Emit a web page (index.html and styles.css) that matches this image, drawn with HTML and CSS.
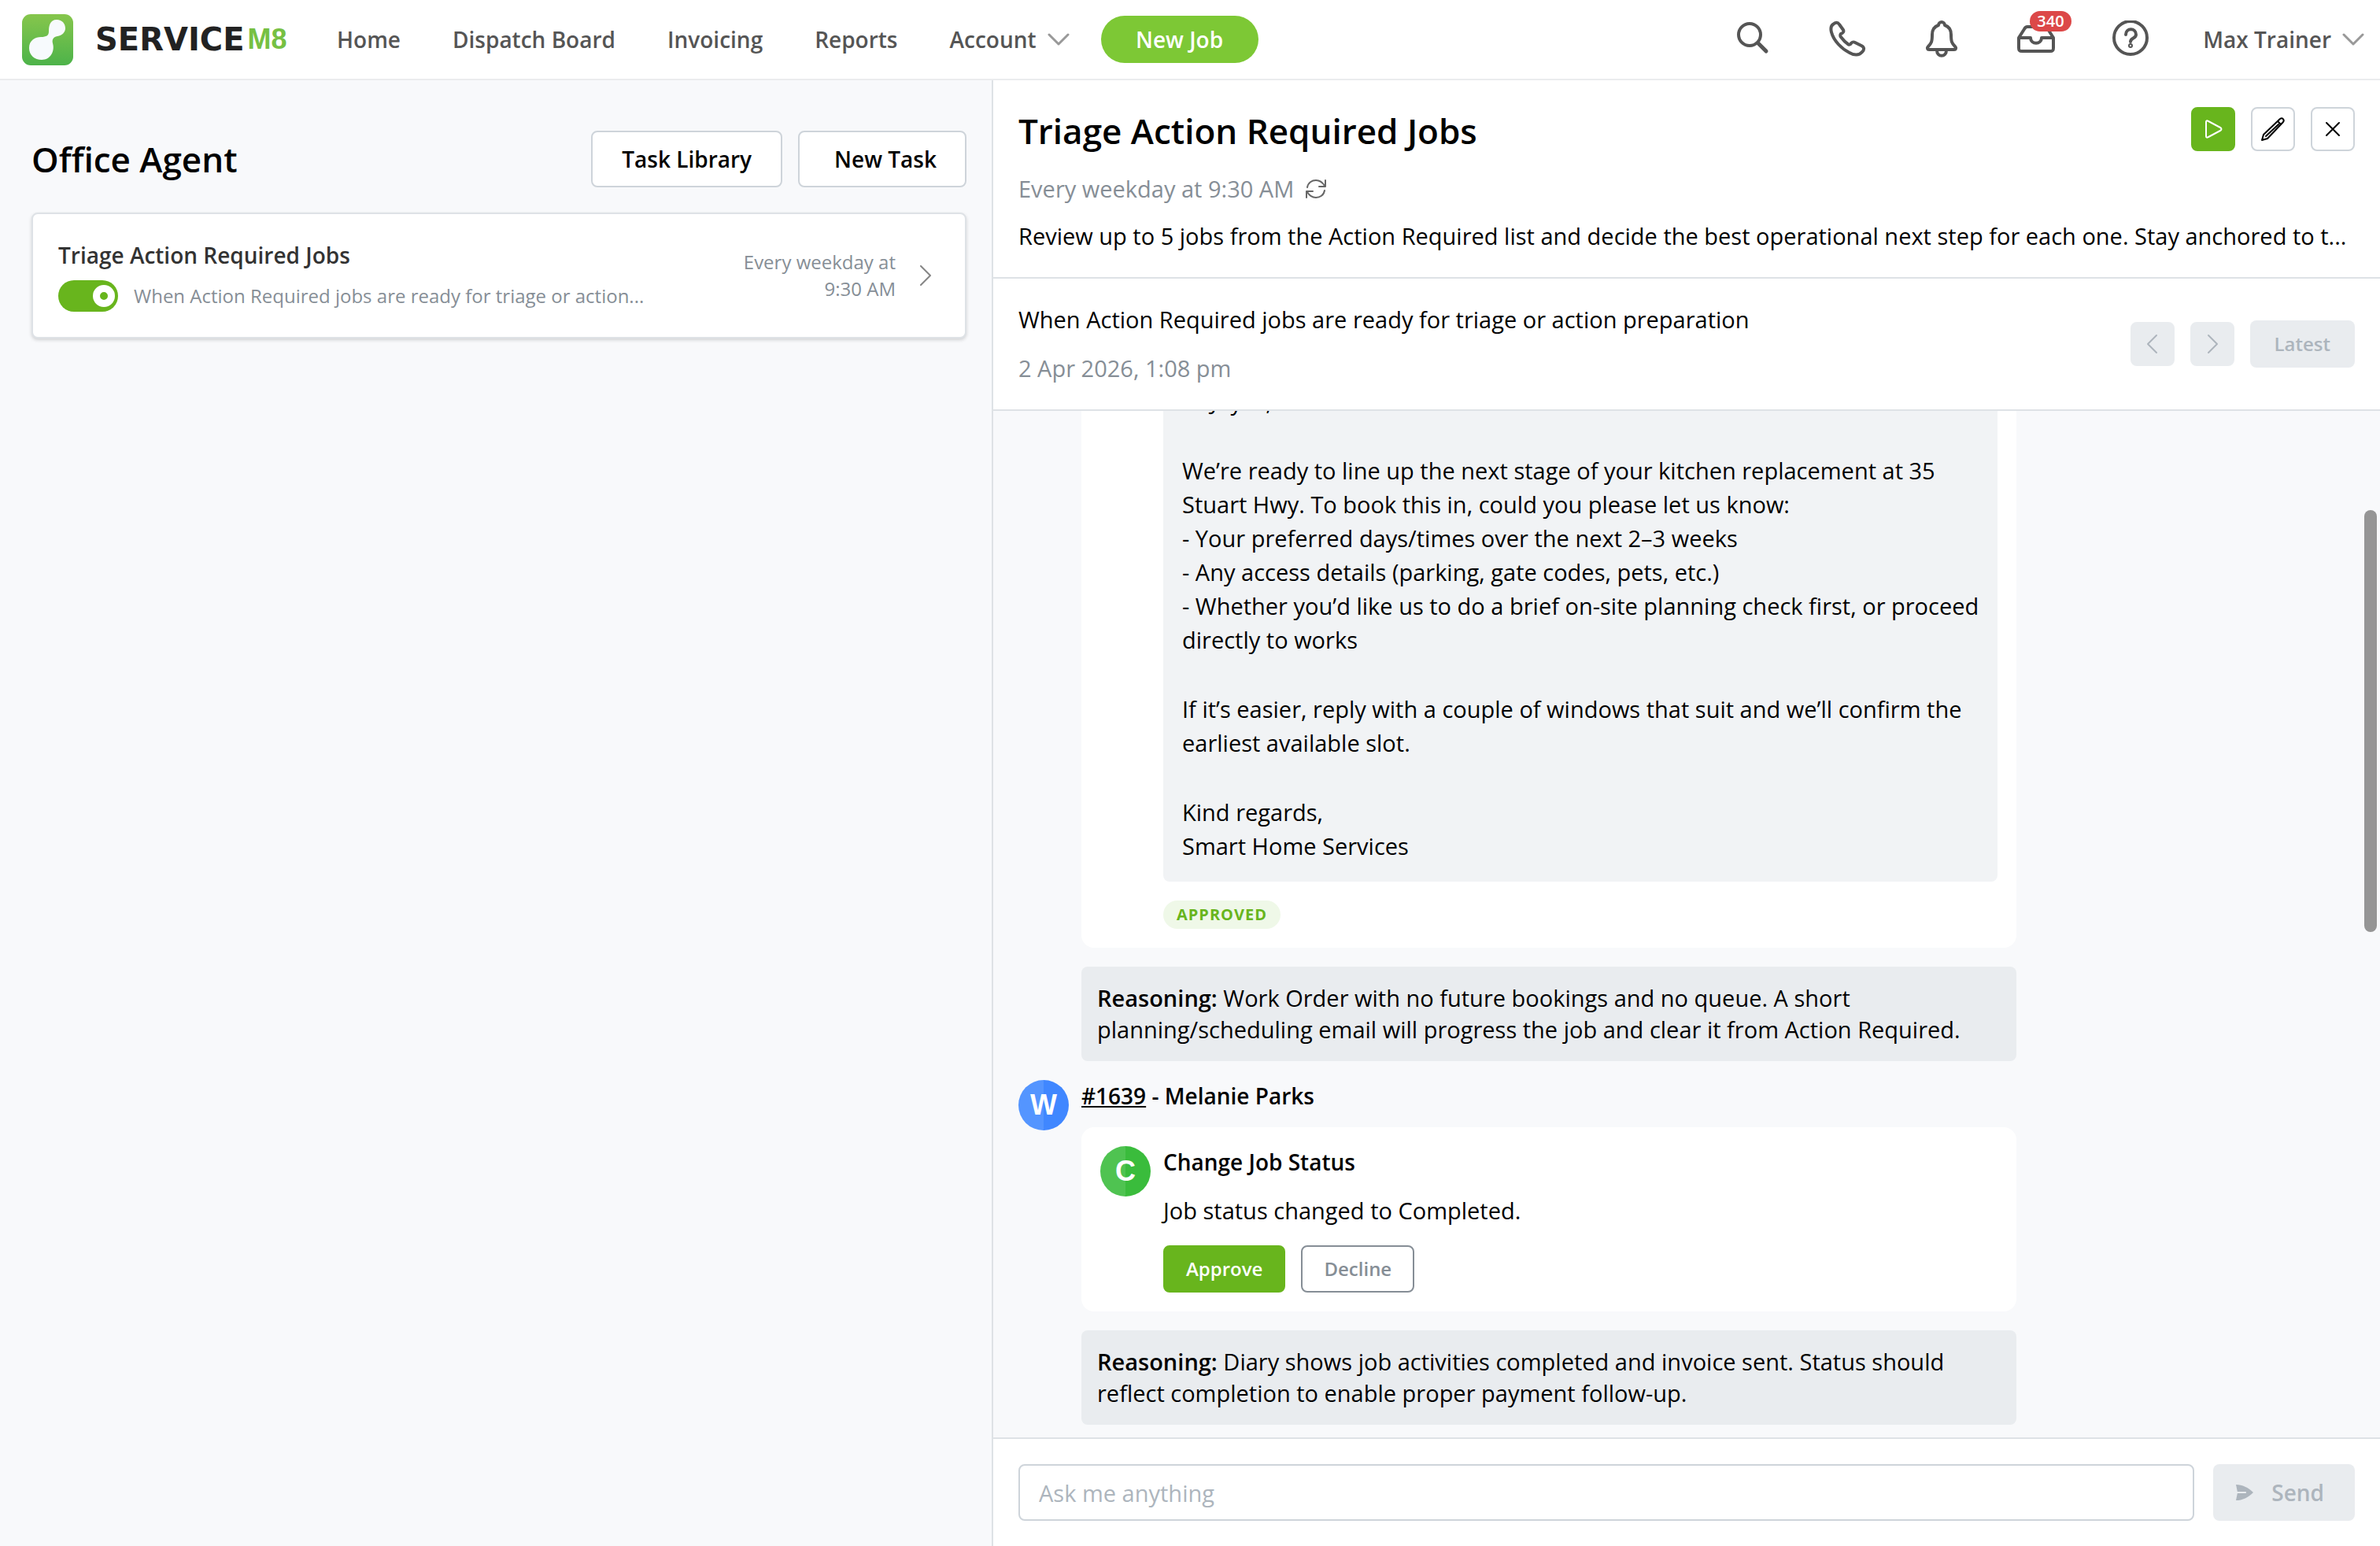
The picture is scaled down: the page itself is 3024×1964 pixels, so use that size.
FILE: index.html
```
<!DOCTYPE html>
<html lang="en">
  <head>
    <meta charset="UTF-8" />
    <title>Office Agent - ServiceM8</title>
    <link rel="stylesheet" href="styles.css">
  </head>
  <body>
    <!-- Top navigation -->
    <header class="topbar">
      <a class="logo" href="#" aria-label="ServiceM8">
        <svg class="logo-mark" viewBox="0 0 65 65">
          <defs>
            <linearGradient id="logoGreen" x1="0" y1="0" x2="0" y2="1">
              <stop offset="0" stop-color="#86c64c" />
              <stop offset="1" stop-color="#4db34a" />
            </linearGradient>
          </defs>
          <rect width="65" height="65" rx="11" fill="url(#logoGreen)" />
          <path fill="#f7fafd" d="M44 7c7 0 11 5 11 11 0 5-4 9-10 10-6 1-7 5-6 9 3 10-3 21-14 21-9 0-16-6-16-15 0-10 8-14 15-14 7 0 10-2 10-7 0-8 2-15 10-15z" />
        </svg>
        <span class="logo-name">SERVICE</span><span class="logo-m8">M8</span>
      </a>
      <nav class="nav">
        <a href="#">Home</a>
        <a href="#">Dispatch Board</a>
        <a href="#">Invoicing</a>
        <a href="#">Reports</a>
        <a href="#" class="has-arrow">Account
          <svg class="arrow" viewBox="0 0 28 16"><path d="M2 2l12 12L26 2" /></svg>
        </a>
      </nav>
      <button class="new-job">New Job</button>

      <div class="tools">
        <button class="tool" aria-label="Search">
          <svg viewBox="0 2 48 48"><circle cx="20" cy="20" r="14" /><path d="M31 31l10 10" stroke-width="5" /></svg>
        </button>
        <button class="tool" aria-label="Phone">
          <svg viewBox="0 2 48 48"><path d="M6 7c3-3 6-3 8 0l5 7c1 2 0 4-3 5-1 1-1 3 0 4 3 4 6 7 9 9 1 1 3 1 4-1 2-2 3-2 5-1l8 4c4 2 4 5 1 8-4 5-11 4-16 1C17 38 7 28 4 17 3 13 3 9 6 7z" /></svg>
        </button>
        <button class="tool" aria-label="Notifications">
          <svg viewBox="0 2 48 48"><path d="M24 4c-2 0-4 2-4 4-6 2-8 7-8 12 0 9-1 11-5 15-2 2-1 4 1 4h32c2 0 3-2 1-4-4-4-5-6-5-15 0-5-2-10-8-12 0-2-2-4-4-4zM18 40c0 9 12 9 12 0" /></svg>
        </button>
        <button class="tool" aria-label="Inbox">
          <svg viewBox="0 2 48 48"><path d="M2 24l7-11c1-2 2-3 4-3h22c2 0 3 1 4 3l7 11v13c0 3-1 4-4 4H6c-3 0-4-1-4-4zM2 24h15c0 9 14 9 14 0h15" /></svg>
          <span class="badge">340</span>
        </button>
        <button class="tool" aria-label="Help">
          <svg viewBox="0 2 48 48"><circle cx="24" cy="24" r="21" /><path d="M18 20c0-9 13-9 13 0 0 5-7 4-7 9" /><circle cx="24" cy="34" r="1" /></svg>
        </button>
      </div>
      <a href="#" class="user has-arrow">Max Trainer
        <svg class="arrow" viewBox="0 0 28 16"><path d="M2 2l12 12L26 2" /></svg>
      </a>
    </header>

    <main class="columns">
      <!-- Task list -->
      <section class="tasks">
        <div class="tasks-head">
          <h1>Office Agent</h1>
          <button class="btn">Task Library</button>
          <button class="btn btn-new">New Task</button>
        </div>
        <article class="task">
          <div class="task-main">
            <h2>Triage Action Required Jobs</h2>
            <div class="task-row">
              <input type="checkbox" class="toggle" id="taskOn" checked>
              <label for="taskOn">When Action Required jobs are ready for triage or action...</label>
            </div>
          </div>
          <p class="task-time">Every weekday at 9:30 AM</p>
          <svg class="task-go" viewBox="0 0 16 26"><path d="M2 1l12 12L2 25" /></svg>
        </article>
      </section>

      <!-- Task detail -->
      <section class="detail">
        <div class="detail-head">
          <div class="title-row">
            <h2>Triage Action Required Jobs</h2>
            <button class="icon-btn icon-run" aria-label="Run">
              <svg viewBox="0 0 32 32"><path d="M7 7v18c0 2 1 2 3 1l15-8c2-1 2-3 0-4L10 6C8 5 7 5 7 7z" /></svg>
            </button>
            <button class="icon-btn" aria-label="Edit">
              <svg viewBox="0 0 32 32"><path d="M2 30l2-7L25 3c3-2 6 1 4 4L9 28zM22 6l4 4M7 25L23 10" /></svg>
            </button>
            <button class="icon-btn" aria-label="Close">
              <svg viewBox="0 0 32 32"><path d="M8 8l16 16M24 8L8 24" /></svg>
            </button>
          </div>
          <p class="schedule">Every weekday at 9:30 AM
            <svg viewBox="0 0 28 28"><path d="M3 12C4 6 9 3 14 3c5 0 8 2 11 7M26 3v8h-8M25 16c-1 6-6 9-11 9-5 0-8-2-11-7M2 25v-8h8" /></svg>
          </p>
          <p class="prompt">Review up to 5 jobs from the Action Required list and decide the best operational next step for each one. Stay anchored to t...</p>
        </div>

        <div class="run-head">
          <div class="run-info">
            <p>When Action Required jobs are ready for triage or action preparation</p>
            <p class="run-date">2 Apr 2026, 1:08 pm</p>
          </div>
          <button class="icon-btn icon-off" aria-label="Previous" disabled>
            <svg viewBox="0 0 32 32"><path d="M21 5L10 16l11 11" /></svg>
          </button>
          <button class="icon-btn icon-off" aria-label="Next" disabled>
            <svg viewBox="0 0 32 32"><path d="M11 5l11 11-11 11" /></svg>
          </button>
          <button class="latest" disabled>Latest</button>
        </div>

        <div class="chat">
          <div class="card">
            <div class="email">
              <p>Hi Joyce,</p>
              <p>We’re ready to line up the next stage of your kitchen replacement at 35 Stuart Hwy. To book this in, could you please let us know:<br>
                - Your preferred days/times over the next 2–3 weeks<br>
                - Any access details (parking, gate codes, pets, etc.)<br>
                - Whether you’d like us to do a brief on-site planning check first, or proceed directly to works</p>
              <p>If it’s easier, reply with a couple of windows that suit and we’ll confirm the earliest available slot.</p>
              <p>Kind regards,<br>Smart Home Services</p>
            </div>
            <span class="approved">APPROVED</span>
          </div>
          <p class="reasoning"><b>Reasoning:</b> Work Order with no future bookings and no queue. A short planning/scheduling email will progress the job and clear it from Action Required.</p>

          <div class="job">
            <span class="avatar avatar-blue">W</span>
            <h3><a href="#">#1639</a> - Melanie Parks</h3>
          </div>
          <div class="card">
            <span class="avatar avatar-green">C</span>
            <div class="action">
              <h3>Change Job Status</h3>
              <p>Job status changed to Completed.</p>
              <div class="action-buttons">
                <button class="approve">Approve</button>
                <button class="decline">Decline</button>
              </div>
            </div>
          </div>
          <p class="reasoning"><b>Reasoning:</b> Diary shows job activities completed and invoice sent. Status should reflect completion to enable proper payment follow-up.</p>
          <span class="scroll-thumb"></span>
        </div>

        <form class="ask">
          <input type="text" placeholder="Ask me anything" aria-label="Ask me anything">
          <button class="send" disabled>
            <svg viewBox="0 0 24 24"><path d="M0 1c9 0 17 4 24 11-7 7-15 11-24 11l2-10h12v-2H2z" /></svg>
            Send
          </button>
        </form>
      </section>
    </main>
  </body>
</html>
```
FILE: styles.css
```
*,
*::before {
  box-sizing: border-box;
}

body {
  margin: 0;
  height: 100vh;
  display: flex;
  flex-direction: column;
  font-family: "Open Sans", "Noto Sans", sans-serif;
  font-size: 29px;
  line-height: 40px;
  color: #000;
  background: #f8f9fb;
}

h1,
h2,
h3,
p {
  margin: 0;
  font-weight: 400;
}

button,
input {
  font: inherit;
}

button {
  padding: 0;
  border: none;
  cursor: pointer;
}

svg {
  display: block;
  fill: none;
  stroke: currentColor;
  stroke-linecap: round;
  stroke-linejoin: round;
}

/* Top navigation */
.topbar {
  display: flex;
  align-items: center;
  height: 102px;
  padding: 0 20px 0 28px;
  background: #fff;
  border-bottom: 2px solid #ebecee;
  color: #555;
  font-size: 28px;
  font-weight: 600;
}

.topbar a {
  color: inherit;
  text-decoration: none;
}

.logo {
  display: flex;
  align-items: center;
  width: 400px;
}

.logo-mark {
  width: 65px;
  height: 65px;
  margin-right: 28px;
  stroke: none;
}

.logo-name {
  color: #222;
  font: bold 40px "DejaVu Sans", sans-serif;
}

.topbar .logo-m8 {
  margin-left: 4px;
  color: #76c043;
  font: bold 36px "Liberation Sans Narrow", sans-serif;
}

.nav {
  display: flex;
  gap: 66px;
}

.has-arrow {
  display: flex;
  align-items: center;
  gap: 14px;
}

.arrow {
  width: 28px;
  height: 16px;
  stroke: #999;
  stroke-width: 3;
}

.new-job {
  width: 200px;
  height: 60px;
  margin-left: 40px;
  border-radius: 30px;
  background: #7dc835;
  color: #fff;
}

.tools {
  display: flex;
  gap: 72px;
  margin-left: auto;
}

.tool {
  position: relative;
  width: 48px;
  height: 48px;
  background: none;
  color: #555;
}

.tool svg {
  width: 48px;
  height: 48px;
  stroke-width: 4;
}

/* Unread count over the inbox */
.badge {
  position: absolute;
  top: -12px;
  left: 16px;
  padding: 0 9px;
  border-radius: 13px;
  background: #dc4848;
  color: #fff;
  font-size: 20px;
  line-height: 26px;
}

.user {
  margin-left: 68px;
}

/* Two columns */
.columns {
  flex: 1;
  min-height: 0;
  display: grid;
  grid-template-columns: 5fr 7fr;
}

.tasks {
  padding: 64px 32px 0 40px;
}

.tasks-head {
  display: flex;
  align-items: center;
  gap: 20px;
}

.tasks-head h1 {
  flex: 1;
  font-size: 44px;
  font-weight: 600;
}

.btn {
  height: 72px;
  padding: 0 37px;
  border: 2px solid #ced4da;
  border-radius: 8px;
  background: #fff;
  font-size: 28px;
  font-weight: 600;
}

.btn-new {
  padding: 0 36px 0 44px;
}

.task {
  display: flex;
  align-items: center;
  margin-top: 32px;
  padding: 32px 42px 32px 32px;
  border: 2px solid #dee2e6;
  border-radius: 8px;
  background: #fff;
  box-shadow: 0 2px 4px rgba(0, 0, 0, 0.16);
}

.task-main {
  flex: 1;
}

.task-main h2 {
  font-size: 28px;
  font-weight: 600;
  color: #333;
}

.task-row {
  display: flex;
  align-items: center;
  gap: 20px;
  margin-top: 12px;
  font-size: 24px;
  color: #868e96;
}

/* On/off switch */
.toggle {
  appearance: none;
  display: flex;
  align-items: center;
  justify-content: flex-end;
  width: 76px;
  height: 40px;
  margin: 0;
  padding: 4px;
  border-radius: 20px;
  background: #68b51d;
}

.toggle::before {
  content: "";
  width: 28px;
  height: 28px;
  border: 9px solid #fff;
  border-radius: 50%;
}

.task-time {
  width: 220px;
  font-size: 24px;
  line-height: 34px;
  text-align: right;
  color: #868e96;
}

.task-go {
  width: 16px;
  height: 26px;
  margin-left: 30px;
  stroke: #868686;
  stroke-width: 2;
}

/* Detail panel */
.detail {
  display: flex;
  flex-direction: column;
  min-width: 0;
  min-height: 0;
  border-left: 2px solid #dee2e6;
}

.detail-head {
  padding: 34px 32px 32px;
  border-bottom: 2px solid #dee2e6;
  background: #fff;
}

.title-row {
  display: flex;
  gap: 20px;
}

.title-row h2 {
  flex: 1;
  font-size: 44px;
  line-height: 60px;
  font-weight: 600;
}

.icon-btn {
  display: flex;
  align-items: center;
  justify-content: center;
  width: 56px;
  height: 56px;
  border: 2px solid #ced4da;
  border-radius: 8px;
  background: #fff;
  color: #000;
}

.icon-btn svg {
  width: 32px;
  height: 32px;
  stroke-width: 2;
}

.icon-run {
  border-color: #68b51d;
  background: #68b51d;
  color: #fff;
}

.icon-off {
  border-color: #e9ecef;
  background: #e9ecef;
  color: #adb5bd;
}

.schedule {
  display: flex;
  align-items: center;
  gap: 14px;
  margin-top: 24px;
  color: #868e96;
}

.schedule svg {
  width: 28px;
  height: 28px;
  stroke: #666;
  stroke-width: 2;
}

.prompt {
  margin-top: 20px;
  overflow: hidden;
  white-space: nowrap;
  text-overflow: ellipsis;
}

.run-head {
  display: flex;
  align-items: center;
  gap: 20px;
  padding: 32px;
  border-bottom: 2px solid #dee2e6;
  background: #fff;
}

.run-info {
  flex: 1;
}

.run-date {
  margin-top: 22px;
  color: #868e96;
}

.latest {
  height: 60px;
  padding: 0 31px;
  border-radius: 8px;
  background: #e9ecef;
  color: #adb5bd;
  font-size: 24px;
  font-weight: 600;
}

/* Conversation, kept at its latest message */
.chat {
  position: relative;
  flex: 1;
  min-height: 0;
  display: flex;
  flex-direction: column;
  justify-content: flex-end;
  overflow: hidden;
  padding: 0 462px 16px 112px;
}

.card {
  flex: none;
  padding: 24px;
  border-radius: 16px;
  background: #fff;
}

.email {
  margin-left: 80px;
  padding: 24px 20px 24px 24px;
  border-radius: 8px;
  background: #f1f3f5;
  line-height: 43px;
}

.email p + p {
  margin-top: 45px;
}

.approved {
  display: block;
  width: max-content;
  margin: 24px 0 0 80px;
  padding: 0 17px;
  border-radius: 18px;
  background: #eff8e8;
  color: #68b51d;
  font-size: 20px;
  line-height: 36px;
  font-weight: 700;
  letter-spacing: 1px;
}

.reasoning {
  flex: none;
  margin-top: 24px;
  padding: 20px;
  border-radius: 8px;
  background: #e9ecef;
}

.reasoning b {
  font-weight: 600;
}

.job {
  display: flex;
  gap: 16px;
  height: 60px;
  margin: 24px 0 0 -80px;
}

.job h3,
.action h3 {
  font-size: 28px;
  font-weight: 600;
}

.job a {
  color: inherit;
}

.avatar {
  flex: none;
  width: 64px;
  height: 64px;
  border-radius: 50%;
  color: #fff;
  font-family: "Liberation Sans", sans-serif;
  font-size: 36px;
  font-weight: 700;
  line-height: 64px;
  text-align: center;
}

.avatar-blue {
  background: linear-gradient(90deg, #5495ff 50%, #4087ff 50%);
}

.avatar-green {
  background: linear-gradient(90deg, #4fc351 50%, #3abc3c 50%);
}

.card:has(.action) {
  display: flex;
  gap: 16px;
}

.action p {
  margin-top: 22px;
}

.action-buttons {
  display: flex;
  gap: 20px;
  margin-top: 24px;
}

.approve,
.decline {
  height: 60px;
  padding: 0 27px;
  border: 2px solid #68b51d;
  border-radius: 8px;
  background: #68b51d;
  color: #fff;
  font-size: 24px;
  font-weight: 600;
}

.decline {
  border-color: #868e96;
  background: #fff;
  color: #868e96;
}

.scroll-thumb {
  position: absolute;
  top: 126px;
  right: 4px;
  width: 16px;
  height: 536px;
  border-radius: 8px;
  background: #959595;
}

/* Message box */
.ask {
  display: flex;
  gap: 24px;
  padding: 32px;
  border-top: 2px solid #dee2e6;
  background: #fff;
}

.ask input {
  flex: 1;
  height: 72px;
  padding: 0 24px;
  border: 2px solid #ced4da;
  border-radius: 8px;
}

.ask input::placeholder {
  color: #adb5bd;
}

.send {
  display: flex;
  align-items: center;
  gap: 22px;
  padding: 0 39px 0 28px;
  border-radius: 8px;
  background: #e9ecef;
  color: #adb5bd;
  font-size: 28px;
  font-weight: 600;
}

.send svg {
  width: 24px;
  height: 22px;
  fill: currentColor;
  stroke: none;
}
```
